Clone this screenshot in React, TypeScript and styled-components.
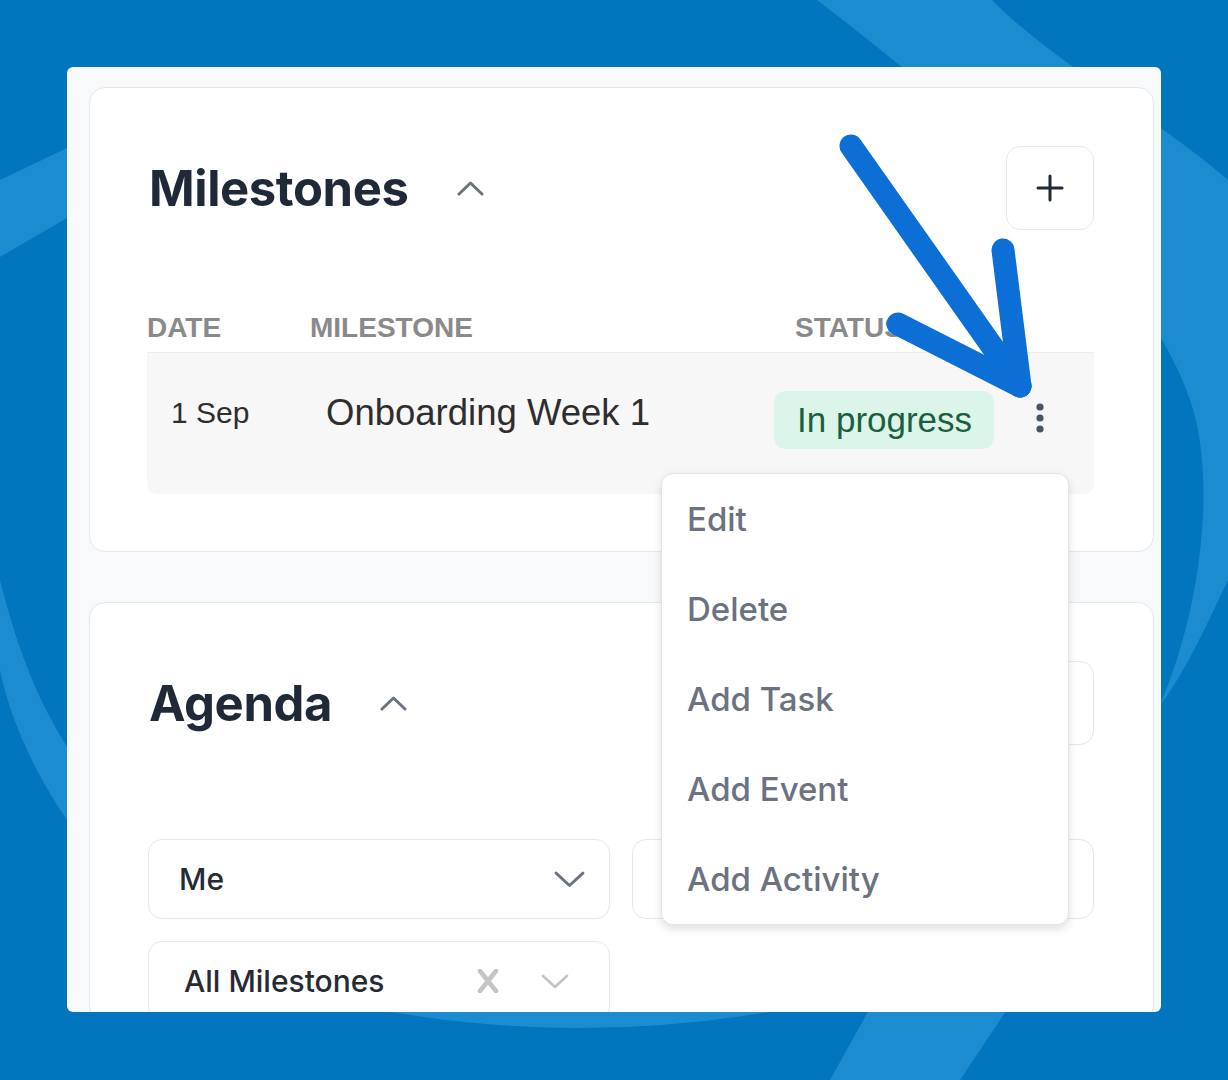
import React from 'react'
import styled, { createGlobalStyle } from 'styled-components'

const GlobalStyle = createGlobalStyle`
  html, body { margin: 0; padding: 0; }
  body { background: #0175bd; font-family: Inter, 'Noto Sans', sans-serif; }
  * { box-sizing: border-box; }
`

const Page = styled.div`
  position: relative;
  width: 1228px;
  height: 1080px;
  overflow: hidden;
  background: #0175bd;
  padding: 67px 67px 0 67px;
`

const Backdrop = styled.svg`
  position: absolute;
  left: 0;
  top: 0;
  z-index: 0;
`

const Annotation = styled.svg`
  position: absolute;
  left: 0;
  top: 0;
  z-index: 10;
  pointer-events: none;
`

const Frame = styled.div`
  position: relative;
  z-index: 1;
  width: 1094px;
  height: 945px;
  overflow: hidden;
  background: #f8f9fa;
  border-radius: 6px;
  padding: 20px 7px 0 22px;
  display: flex;
  flex-direction: column;
  gap: 50px;
`

const Card = styled.section<{ $height?: number; $layer?: number }>`
  position: relative;
  z-index: ${p => p.$layer || 1};
  flex-shrink: 0;
  height: ${p => (p.$height ? `${p.$height}px` : 'auto')};
  background: #fff;
  border: 1px solid #e6e7ea;
  border-radius: 16px;
  padding: 58px 59px 0 57px;
`

const Header = styled.div`
  display: flex;
  align-items: center;
  height: 84px;
`

const Title = styled.h2`
  margin: 0 0 0 2px;
  font-family: Inter, sans-serif;
  font-size: 49px;
  font-weight: 700;
  line-height: 1;
  color: #1f2937;
  letter-spacing: -0.4px;
`

const Toggle = styled.span`
  display: flex;
  margin-left: 48px;
`

const Spacer = styled.div`
  flex: 1;
`

const SquareButton = styled.button`
  width: 88px;
  height: 84px;
  border: 1px solid #e5e7eb;
  border-radius: 14px;
  background: #fff;
  display: flex;
  align-items: center;
  justify-content: center;
  padding: 0;
`

const TableHead = styled.div`
  margin-top: 81px;
  display: grid;
  grid-template-columns: 163px 485px 1fr;
  padding-bottom: 7px;
  border-bottom: 1px solid #ececec;
  font-family: 'Liberation Sans', Arial, sans-serif;
  font-size: 28px;
  font-weight: 700;
  line-height: 34px;
  color: #8a8a8a;
`

const Row = styled.div`
  position: relative;
  display: flex;
  align-items: flex-start;
  height: 141px;
  padding: 40px 0 0 24px;
  background: #f7f7f7;
  border-radius: 0 0 10px 10px;
  font-family: 'Liberation Sans', Arial, sans-serif;
  color: #2e2e2e;
`

const Cell = styled.div<{ $width: number; $size: number }>`
  width: ${p => p.$width}px;
  font-size: ${p => p.$size}px;
  line-height: 40px;
`

const Badge = styled.span`
  margin-top: -2px;
  height: 58px;
  padding: 0 22px 0 23px;
  display: flex;
  align-items: center;
  background: #dcf5ea;
  border-radius: 12px;
  color: #1b5f3d;
  font-size: 35px;
`

const Kebab = styled.span`
  margin: 5px 0 0 34px;
  width: 24px;
  height: 40px;
  display: flex;
  align-items: center;
  justify-content: center;
`

const Menu = styled.ul`
  position: absolute;
  left: 514px;
  top: 120px;
  z-index: 5;
  width: 408px;
  margin: 0;
  padding: 0;
  list-style: none;
  background: #fff;
  border: 1px solid #e3e4e8;
  border-radius: 12px;
  box-shadow: 0 4px 10px rgba(0, 0, 0, 0.13);
`

const MenuItem = styled.li`
  height: 90px;
  padding-left: 25px;
  display: flex;
  align-items: center;
  font-family: Inter, sans-serif;
  font-size: 33px;
  font-weight: 500;
  color: #6b7280;
`

const Filters = styled.div`
  margin-top: 94px;
  display: grid;
  grid-template-columns: 1fr 1fr;
  gap: 22px;
  padding-left: 1px;
`

const Select = styled.div<{ $padLeft: number; $padRight: number }>`
  height: 80px;
  border: 1px solid #e5e7eb;
  border-radius: 14px;
  background: #fff;
  display: flex;
  align-items: center;
  padding: 0 ${p => p.$padRight}px 0 ${p => p.$padLeft}px;
  font-family: Inter, sans-serif;
  font-size: 30px;
  font-weight: 500;
  color: #262b33;
`

const SelectValue = styled.span`
  flex: 1;
`

const SelectIcons = styled.span`
  display: flex;
  align-items: center;
  gap: 42px;
`

const ChevronUp = () => (
  <svg width="27" height="16" viewBox="0 0 27 16" fill="none">
    <polyline points="2,14 13.5,3 25,14" stroke="#6b7280" strokeWidth="3" strokeLinecap="round" strokeLinejoin="round" />
  </svg>
)

const ChevronDown = ({ color, width }: { color: string; width: number }) => (
  <svg width={width} height={width * 0.6} viewBox="0 0 30 18" fill="none">
    <polyline points="2,3 15,15 28,3" stroke={color} strokeWidth="2.8" strokeLinecap="round" strokeLinejoin="round" />
  </svg>
)

const PlusIcon = () => (
  <svg width="28" height="28" viewBox="0 0 28 28" fill="none">
    <path d="M14 2v24M2 14h24" stroke="#1f2937" strokeWidth="3" strokeLinecap="round" />
  </svg>
)

const ClearIcon = () => (
  <svg width="22" height="24" viewBox="0 0 22 24" fill="none">
    <path d="M3 2l16 20M19 2L3 22" stroke="#c4c4c4" strokeWidth="4.5" strokeLinecap="round" />
  </svg>
)

const DotsIcon = () => (
  <svg width="10" height="30" viewBox="0 0 10 30" fill="#4b5563">
    <circle cx="5" cy="4" r="3.6" />
    <circle cx="5" cy="15" r="3.6" />
    <circle cx="5" cy="26" r="3.6" />
  </svg>
)

const menuItems = ['Edit', 'Delete', 'Add Task', 'Add Event', 'Add Activity']

export default function App() {
  return (
    <>
      <GlobalStyle />
      <Page>
        <Backdrop width="1228" height="1080" viewBox="0 0 1228 1080">
          <g fill="#1b8cd0">
            <path d="M817 0 L992 0 C1050 60 1160 120 1228 180 L1228 580 C1200 640 1180 680 1160 705 C1205 600 1215 470 1190 400 C1150 280 1000 140 817 0 Z" />
            <path d="M0 180 L67 148 L160 110 L160 180 L67 218 L0 257 Z" />
            <path d="M0 580 C20 660 45 720 90 780 L90 850 C40 790 10 720 0 670 Z" />
            <path d="M330 1000 Q580 1056 830 1000 Z" />
            <path d="M830 1080 L960 1080 L1020 990 L880 990 Z" />
          </g>
        </Backdrop>

        <Frame>
          <Card $height={465} $layer={2}>
            <Header>
              <Title>Milestones</Title>
              <Toggle><ChevronUp /></Toggle>
              <Spacer />
              <SquareButton><PlusIcon /></SquareButton>
            </Header>
            <TableHead>
              <span>DATE</span>
              <span>MILESTONE</span>
              <span>STATUS</span>
            </TableHead>
            <Row>
              <Cell $width={155} $size={30}>1 Sep</Cell>
              <Cell $width={448} $size={36.5}>Onboarding Week 1</Cell>
              <Badge>In progress</Badge>
              <Kebab><DotsIcon /></Kebab>
              <Menu>
                {menuItems.map(item => (
                  <MenuItem key={item}>{item}</MenuItem>
                ))}
              </Menu>
            </Row>
          </Card>

          <Card>
            <Header>
              <Title>Agenda</Title>
              <Toggle><ChevronUp /></Toggle>
              <Spacer />
              <SquareButton><PlusIcon /></SquareButton>
            </Header>
            <Filters>
              <Select $padLeft={30} $padRight={24}>
                <SelectValue>Me</SelectValue>
                <ChevronDown color="#6b7280" width={31} />
              </Select>
              <Select $padLeft={30} $padRight={24}>
                <SelectValue />
                <ChevronDown color="#6b7280" width={31} />
              </Select>
              <Select $padLeft={35} $padRight={40}>
                <SelectValue>All Milestones</SelectValue>
                <SelectIcons>
                  <ClearIcon />
                  <ChevronDown color="#c4c4c4" width={28} />
                </SelectIcons>
              </Select>
            </Filters>
          </Card>
        </Frame>

        <Annotation width="1228" height="1080" viewBox="0 0 1228 1080">
          <g stroke="#0b6fd5" strokeWidth="23" strokeLinecap="round" strokeLinejoin="round" fill="none">
            <path d="M851 146 L1020 386" />
            <path d="M1003 250 L1020 386" />
            <path d="M898 324 L1020 386" />
          </g>
        </Annotation>
      </Page>
    </>
  )
}
